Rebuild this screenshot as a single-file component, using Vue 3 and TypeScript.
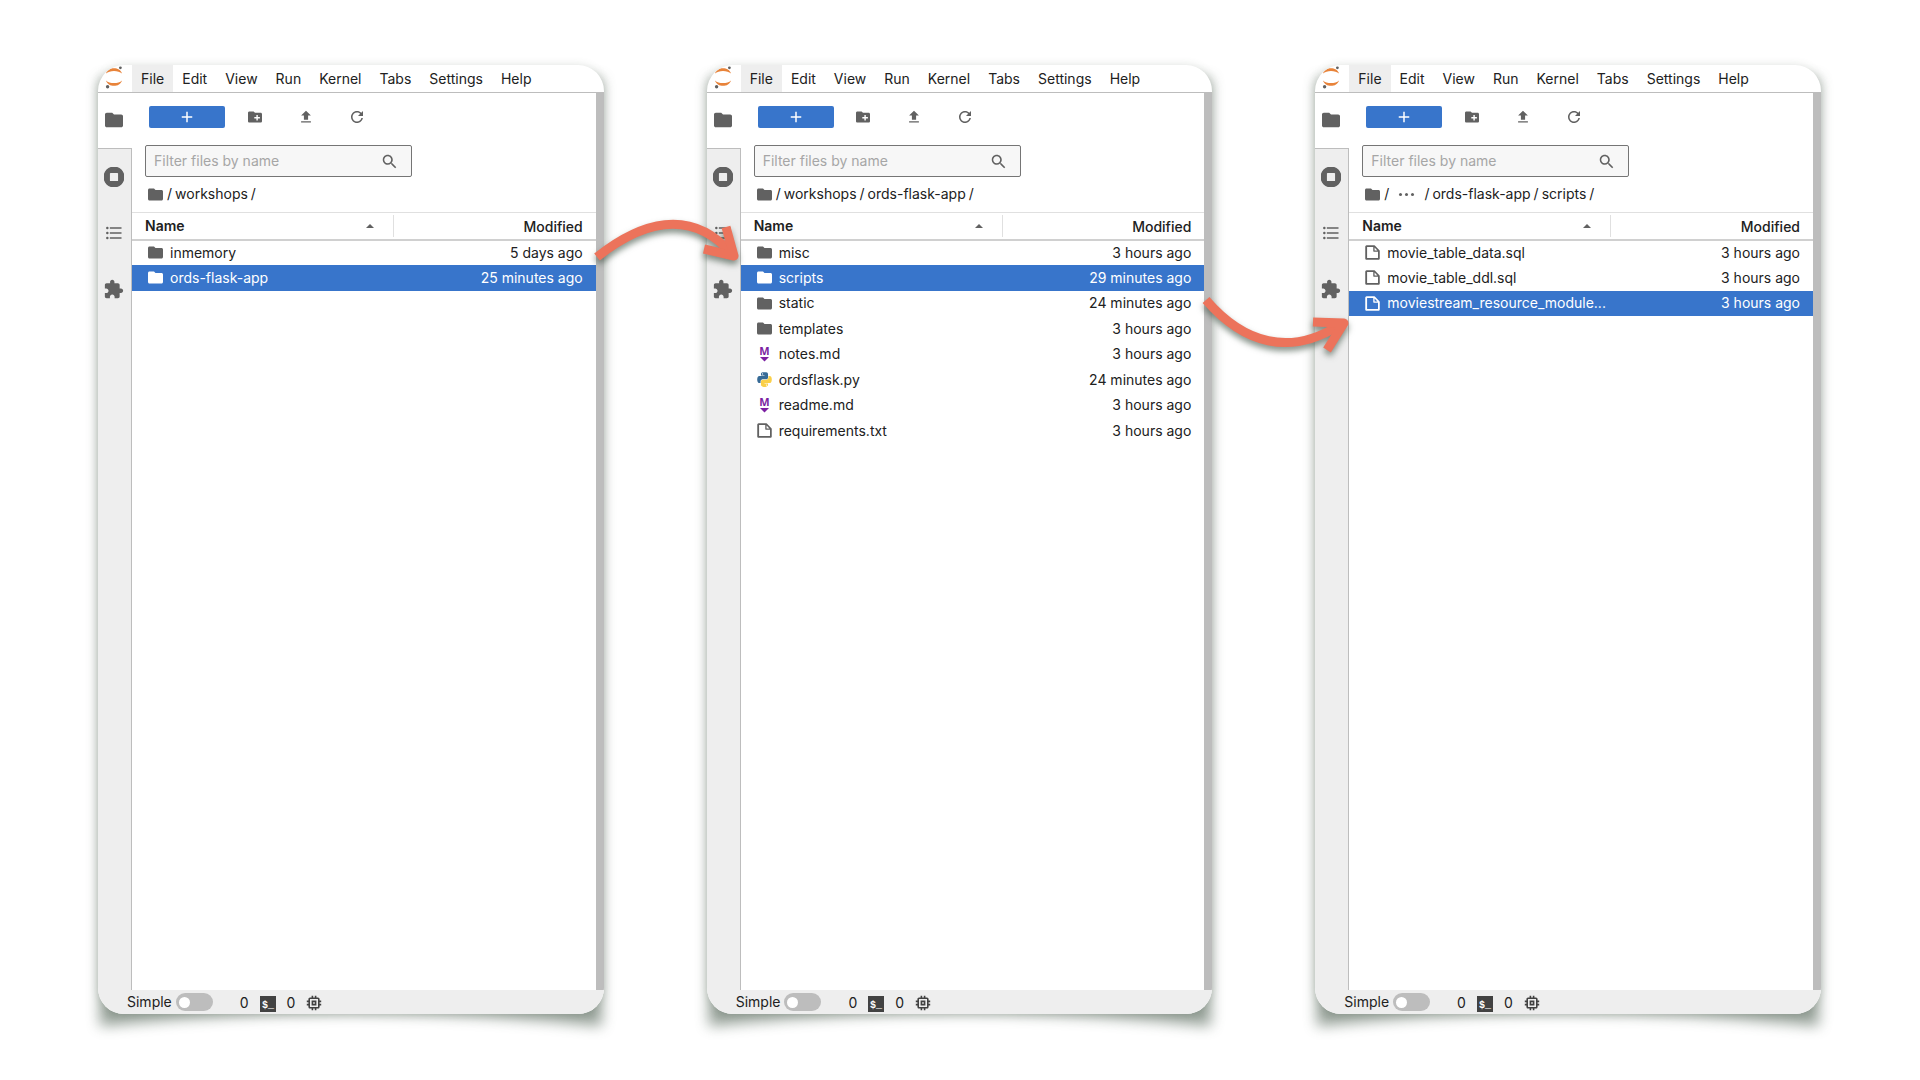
<script setup lang="ts">
type IconName =
  | 'folder' | 'newFolder' | 'upload' | 'refresh' | 'search' | 'running'
  | 'toc' | 'extension' | 'add' | 'file' | 'kernel'
type FileKind = 'folder' | 'markdown' | 'python' | 'file'

interface FileRow {
  name: string
  kind: FileKind
  modified: string
  selected?: boolean
}

interface Arrow {
  kind: string
  shaft: string
  head: string
}

interface Panel {
  id: string
  crumbs: string[]
  rows: FileRow[]
  arrow?: Arrow
}

const icons: Record<IconName, { box: string; d: string }> = {
  folder: { box: '2 2 20 20', d: 'M10 4H4c-1.1 0-1.99.9-1.99 2L2 18c0 1.1.9 2 2 2h16c1.1 0 2-.9 2-2V8c0-1.1-.9-2-2-2h-8l-2-2z' },
  newFolder: { box: '2 2 20 20', d: 'M20 6h-8l-2-2H4c-1.11 0-1.99.89-1.99 2L2 18c0 1.11.89 2 2 2h16c1.11 0 2-.89 2-2V8c0-1.11-.89-2-2-2zm-1 8h-3v3h-2v-3h-3v-2h3V9h2v3h3v2z' },
  upload: { box: '2 2 20 20', d: 'M5 20h14v-2H5v2zm0-10h4v6h6v-6h4l-7-7-7 7z' },
  refresh: { box: '2 2 14 14', d: 'M9 13.5c-2.49 0-4.5-2.01-4.5-4.5S6.51 4.5 9 4.5c1.24 0 2.36.52 3.17 1.33L10 8h5V3l-1.76 1.76C12.15 3.68 10.66 3 9 3 5.69 3 3.01 5.69 3.01 9S5.69 15 9 15c2.97 0 5.43-2.16 5.9-5h-1.52c-.46 2-2.24 3.5-4.38 3.5z' },
  search: { box: '1 1 16 16', d: 'M12.1 10.9h-.7l-.2-.2c.8-.9 1.3-2.2 1.3-3.5 0-3-2.4-5.4-5.4-5.4S1.8 4.2 1.8 7.1s2.4 5.4 5.4 5.4c1.3 0 2.5-.5 3.5-1.3l.2.2v.7l4.1 4.1 1.2-1.2-4.1-4.1zm-5 0c-2.1 0-3.7-1.7-3.7-3.7s1.7-3.7 3.7-3.7 3.7 1.7 3.7 3.7-1.6 3.7-3.7 3.7z' },
  running: { box: '20 20 472 472', d: 'M256 8C119 8 8 119 8 256s111 248 248 248 248-111 248-248S393 8 256 8zm96 328c0 8.8-7.2 16-16 16H176c-8.8 0-16-7.2-16-16V176c0-8.8 7.2-16 16-16h160c8.8 0 16 7.2 16 16v160z' },
  toc: { box: '0 0 24 24', d: 'M7,5H21V7H7V5M7,13V11H21V13H7M4,4.5A1.5,1.5 0 0,1 5.5,6A1.5,1.5 0 0,1 4,7.5A1.5,1.5 0 0,1 2.5,6A1.5,1.5 0 0,1 4,4.5M4,10.5A1.5,1.5 0 0,1 5.5,12A1.5,1.5 0 0,1 4,13.5A1.5,1.5 0 0,1 2.5,12A1.5,1.5 0 0,1 4,10.5M7,19V17H21V19H7M4,16.5A1.5,1.5 0 0,1 5.5,18A1.5,1.5 0 0,1 4,19.5A1.5,1.5 0 0,1 2.5,18A1.5,1.5 0 0,1 4,16.5Z' },
  extension: { box: '1 0 23 23', d: 'M20.5 11H19V7c0-1.1-.9-2-2-2h-4V3.5C13 2.12 11.88 1 10.5 1S8 2.12 8 3.5V5H4c-1.1 0-1.99.9-1.99 2v3.8H3.5c1.49 0 2.7 1.21 2.7 2.7s-1.21 2.7-2.7 2.7H2V20c0 1.1.9 2 2 2h3.8v-1.5c0-1.49 1.21-2.7 2.7-2.7 1.49 0 2.7 1.21 2.7 2.7V22H17c1.1 0 2-.9 2-2v-4h1.5c1.38 0 2.5-1.12 2.5-2.5S21.88 11 20.5 11z' },
  add: { box: '4 4 16 16', d: 'M19 13h-6v6h-2v-6H5v-2h6V5h2v6h6v2z' },
  file: { box: '2 2 18 18', d: 'M19.3 8.2l-5.5-5.5c-.3-.3-.7-.5-1.2-.5H3.9c-.8.1-1.6.9-1.6 1.8v14.1c0 .9.7 1.6 1.6 1.6h14.2c.9 0 1.6-.7 1.6-1.6V9.4c.1-.5-.1-.9-.4-1.2zm-5.8-3.3l3.4 3.6h-3.4V4.9zm3.9 12.7H4.7c-.1 0-.2 0-.2-.2V4.7c0-.2.1-.3.2-.3h7.2v4.4s0 .8.3 1.1c.3.3 1.1.3 1.1.3h4.3v7.2s-.1.2-.2.2z' },
  kernel: { box: '2 2 20 20', d: 'M15 9H9v6h6V9zm-2 4h-2v-2h2v2zm8-2V9h-2V7c0-1.1-.9-2-2-2h-2V3h-2v2h-2V3H9v2H7c-1.1 0-2 .9-2 2v2H3v2h2v2H3v2h2v2c0 1.1.9 2 2 2h2v2h2v-2h2v2h2v-2h2c1.1 0 2-.9 2-2v-2h2v-2h-2v-2h2zm-4 6H7V7h10v10z' },
}

const menus = ['File', 'Edit', 'View', 'Run', 'Kernel', 'Tabs', 'Settings', 'Help']
const tools: { icon: IconName; label: string }[] = [
  { icon: 'newFolder', label: 'New Folder' },
  { icon: 'upload', label: 'Upload Files' },
  { icon: 'refresh', label: 'Refresh File Browser' },
]
const sideTabs: { icon: IconName; label: string }[] = [
  { icon: 'folder', label: 'File Browser' },
  { icon: 'running', label: 'Running Terminals and Kernels' },
  { icon: 'toc', label: 'Table of Contents' },
  { icon: 'extension', label: 'Extension Manager' },
]

const panels: Panel[] = [
  {
    id: 'workshops',
    crumbs: ['workshops'],
    rows: [
      { name: 'inmemory', kind: 'folder', modified: '5 days ago' },
      { name: 'ords-flask-app', kind: 'folder', modified: '25 minutes ago', selected: true },
    ],
  },
  {
    id: 'flask',
    crumbs: ['workshops', 'ords-flask-app'],
    rows: [
      { name: 'misc', kind: 'folder', modified: '3 hours ago' },
      { name: 'scripts', kind: 'folder', modified: '29 minutes ago', selected: true },
      { name: 'static', kind: 'folder', modified: '24 minutes ago' },
      { name: 'templates', kind: 'folder', modified: '3 hours ago' },
      { name: 'notes.md', kind: 'markdown', modified: '3 hours ago' },
      { name: 'ordsflask.py', kind: 'python', modified: '24 minutes ago' },
      { name: 'readme.md', kind: 'markdown', modified: '3 hours ago' },
      { name: 'requirements.txt', kind: 'file', modified: '3 hours ago' },
    ],
    arrow: { kind: 'over', shaft: 'M10 57 C53 23 103 6 145 54', head: 'M139 27 L147 56 L117 49' },
  },
  {
    id: 'scripts',
    crumbs: ['…', 'ords-flask-app', 'scripts'],
    rows: [
      { name: 'movie_table_data.sql', kind: 'file', modified: '3 hours ago' },
      { name: 'movie_table_ddl.sql', kind: 'file', modified: '3 hours ago' },
      { name: 'moviestream_resource_module...', kind: 'file', modified: '3 hours ago', selected: true },
    ],
    arrow: { kind: 'under', shaft: 'M10 10 C48 54 94 66 142 36', head: 'M117 32 L148 33 L131 60' },
  },
]
</script>

<template>
  <main class="board">
    <section v-for="panel in panels" :key="panel.id" class="panel">
      <svg class="shade" viewBox="0 0 506 949" preserveAspectRatio="none" aria-hidden="true">
        <path d="M2 14 H504 V961 Q253 935 2 961 Z" />
      </svg>

      <div class="window">
        <nav class="menubar">
          <svg class="logo" viewBox="0 0 20 24" aria-hidden="true">
            <path d="M2 8.600 C4 1.600 16 1.600 18 8.600 C14.500 5 5.500 5 2 8.600 Z" fill="#e8833a" />
            <path d="M2 15.400 C4 22.600 16 22.600 18 15.400 C14.500 19 5.500 19 2 15.400 Z" fill="#e8833a" />
            <circle cx="16.400" cy="2.800" r="1.400" fill="#616161" />
            <circle cx="3.600" cy="21.800" r="1.700" fill="#616161" />
          </svg>
          <button v-for="(menu, i) in menus" :key="menu" type="button" class="menu" :class="{ open: i === 0 }">{{ menu }}</button>
        </nav>

        <div class="body">
          <aside class="sidebar">
            <button v-for="(tab, i) in sideTabs" :key="tab.icon" type="button" class="side-tab" :class="{ current: i === 0 }" :aria-label="tab.label">
              <svg :class="['side-icon', tab.icon]" :viewBox="icons[tab.icon].box"><path :d="icons[tab.icon].d" /></svg>
            </button>
          </aside>

          <div class="browser">
            <div class="toolbar">
              <button type="button" class="launch" aria-label="New Launcher">
                <svg :viewBox="icons.add.box"><path :d="icons.add.d" /></svg>
              </button>
              <button v-for="tool in tools" :key="tool.icon" type="button" class="tool" :aria-label="tool.label">
                <svg :viewBox="icons[tool.icon].box"><path :d="icons[tool.icon].d" /></svg>
              </button>
            </div>

            <label class="filter">
              <input type="text" placeholder="Filter files by name" aria-label="Filter files by name" />
              <svg :viewBox="icons.search.box" aria-hidden="true"><path :d="icons.search.d" /></svg>
            </label>

            <nav class="crumbs" aria-label="Path">
              <a href="#" aria-label="Root"><svg :viewBox="icons.folder.box"><path :d="icons.folder.d" /></svg></a>
              <span>/</span>
              <template v-for="crumb in panel.crumbs" :key="crumb">
                <a v-if="crumb === '…'" href="#" class="more" aria-label="More folders">
                  <i></i><i></i><i></i>
                </a>
                <a v-else href="#">{{ crumb }}</a>
                <span>/</span>
              </template>
            </nav>

            <table class="listing">
              <thead>
                <tr>
                  <th class="name-head">
                    <div class="name-cell">Name<svg class="caret" viewBox="0 0 10 5" aria-hidden="true"><path d="M0 5 L5 0 L10 5 Z" /></svg></div>
                  </th>
                  <th class="modified-head">Modified</th>
                </tr>
              </thead>
              <tbody>
                <tr v-for="row in panel.rows" :key="row.name" :class="{ selected: row.selected }">
                  <td>
                    <div class="entry">
                      <svg v-if="row.kind === 'markdown'" class="markdown" viewBox="0 0 15 20">
                        <text x="7.500" y="11" text-anchor="middle" class="md-letter">M</text>
                        <path d="M3 13 H12 L7.500 17.500 Z" fill="#7b1fa2" />
                      </svg>
                      <svg v-else-if="row.kind === 'python'" viewBox="-1 -1 113 114">
                        <path fill="#366a96" d="M54.900 0C50.300 0 45.900.4 42.100 1.100 30.800 3.100 28.700 7.300 28.700 15v10.200h26.800v3.400H18.600c-7.800 0-14.600 4.700-16.700 13.600-2.500 10.200-2.600 16.600 0 27.300 1.900 7.900 6.500 13.600 14.200 13.600h9.300V70.900c0-8.900 7.600-16.700 16.700-16.700h26.800c7.400 0 13.400-6.100 13.400-13.600V15c0-7.200-6.100-12.700-13.400-13.900C64.300.3 59.500 0 54.900 0Zm-14.500 8.200c2.800 0 5 2.300 5 5.100s-2.200 5.100-5 5.100-5-2.300-5-5.100 2.200-5.100 5-5.100Z" />
                        <path fill="#fad04a" d="M85.600 28.700v11.900c0 9.200-7.800 17-16.700 17H42.100c-7.300 0-13.400 6.300-13.400 13.600v25.500c0 7.300 6.300 11.500 13.400 13.600 8.500 2.500 16.600 2.900 26.800 0 6.700-2 13.400-5.900 13.400-13.600V86.500H55.500v-3.400h40.200c7.800 0 10.700-5.400 13.400-13.600 2.800-8.400 2.700-16.500 0-27.200-1.900-7.800-5.600-13.600-13.400-13.600ZM70.600 93.300c2.800 0 5 2.300 5 5.100s-2.200 5.100-5 5.100-5-2.300-5-5.100 2.200-5.100 5-5.100Z" />
                      </svg>
                      <svg v-else :viewBox="icons[row.kind].box"><path :d="icons[row.kind].d" /></svg>
                      <span>{{ row.name }}</span>
                    </div>
                  </td>
                  <td class="modified">{{ row.modified }}</td>
                </tr>
              </tbody>
            </table>
          </div>
          <div class="gutter"></div>
        </div>

        <footer class="status">
          <label class="simple">Simple<input type="checkbox" role="switch" /></label>
          <div class="counts">
            <span>0</span>
            <svg class="terminal" viewBox="0 0 16 16" aria-hidden="true">
              <rect width="16" height="16" fill="#424242" />
              <text x="2" y="12" class="prompt">$_</text>
            </svg>
            <span>0</span>
            <svg class="kernel" :viewBox="icons.kernel.box" aria-hidden="true"><path :d="icons.kernel.d" /></svg>
          </div>
        </footer>
      </div>

      <svg v-if="panel.arrow" :class="['arrow', panel.arrow.kind]" viewBox="0 0 160 80" aria-hidden="true">
        <path :d="panel.arrow.shaft" />
        <path :d="panel.arrow.head" />
      </svg>
    </section>
  </main>
</template>

<style>
body {
  margin: 0;
  background: #fff;
}
</style>

<style scoped>
.board {
  box-sizing: border-box;
  display: flex;
  gap: 103px;
  min-height: 100vh;
  padding: 65px 99px 66px 98px;
  overflow: hidden;
  background: #fff;
  color: #212121;
  font-family: Inter, "Liberation Sans", sans-serif;
  font-size: 14px;
  line-height: 20px;
}
.panel {
  position: relative;
  display: flex;
  flex: 1;
  min-width: 0;
}
.shade {
  position: absolute;
  inset: 0;
  width: 100%;
  height: 100%;
  overflow: visible;
  fill: #3c5040;
  opacity: 0.55;
  filter: blur(7px);
}
.window {
  position: relative;
  display: flex;
  flex: 1;
  flex-direction: column;
  min-width: 0;
  overflow: hidden;
  border-radius: 26px;
  background: #fff;
  box-shadow: 0 0 8px rgba(60, 80, 64, 0.16);
}
button {
  display: flex;
  align-items: center;
  justify-content: center;
  padding: 0;
  border: 0;
  background: none;
  color: inherit;
  font: inherit;
}
svg {
  fill: #616161;
  flex: none;
}
.menubar {
  display: flex;
  height: 27px;
  border-bottom: 1px solid #bdbdbd;
}
.logo {
  width: 20px;
  height: 24px;
  padding: 0 8px 0 6px;
}
.menu {
  padding: 0 9px;
}
.menu.open {
  background: #eee;
}
.body {
  display: flex;
  flex: 1;
}
.sidebar {
  display: flex;
  flex-direction: column;
  box-sizing: border-box;
  width: 34px;
  border-right: 1px solid #bdbdbd;
  background: #eee;
}
.side-tab {
  box-sizing: border-box;
  height: 56px;
  padding: 0 1px 1px 0;
}
.side-tab.current {
  margin-right: -1px;
  padding-right: 2px;
  border-bottom: 1px solid #bdbdbd;
  background: #fff;
}
.side-icon {
  width: 18px;
  height: 18px;
}
.side-icon.running,
.side-icon.toc,
.side-icon.extension {
  width: 20px;
  height: 20px;
}
.browser {
  flex: 1;
  min-width: 0;
}
.gutter {
  width: 8px;
  background: #bdbdbd;
}
.toolbar {
  display: flex;
  height: 22px;
  padding: 13px 17px 17px;
}
.launch {
  width: 76px;
  margin-right: 4px;
  border-radius: 2px;
  background: #3875cb;
}
.launch svg {
  width: 12px;
  height: 12px;
  fill: #fff;
}
.tool {
  width: 51px;
}
.tool svg {
  width: 14px;
  height: 14px;
}
.filter {
  display: flex;
  align-items: center;
  box-sizing: border-box;
  width: 267px;
  height: 32px;
  margin-left: 13px;
  padding: 0 14px 0 8px;
  border: 1px solid #757575;
  border-radius: 2px;
  background: #f7f7f7;
}
.filter input {
  flex: 1;
  min-width: 0;
  padding: 0;
  border: 0;
  outline: 0;
  background: none;
  color: inherit;
  font: inherit;
}
.filter input::placeholder {
  color: #a6a6a6;
  opacity: 1;
}
.filter svg {
  width: 15px;
  height: 15px;
}
.crumbs {
  display: flex;
  align-items: center;
  gap: 3px;
  height: 34px;
  padding: 0 0 1px 16px;
}
.crumbs a {
  display: flex;
  align-items: center;
  color: inherit;
  text-decoration: none;
}
.crumbs svg {
  width: 15px;
  height: 15px;
  padding-right: 1px;
}
.crumbs .more {
  gap: 3px;
  padding: 0 7px;
}
.more i {
  width: 3px;
  height: 3px;
  border-radius: 50%;
  background: #616161;
}
.listing {
  width: 100%;
  border-collapse: collapse;
  table-layout: fixed;
}
th {
  box-sizing: border-box;
  height: 27px;
  padding: 0;
  border-top: 1px solid #e0e0e0;
  border-bottom: 2px solid #d0d0d0;
  font-weight: 500;
}
.name-head {
  width: 262px;
  font-weight: 600;
}
.name-cell {
  display: flex;
  align-items: center;
  justify-content: space-between;
  height: 22px;
  padding: 0 19px 0 13px;
  border-right: 1px solid #e0e0e0;
}
.caret {
  width: 8px;
  height: 4px;
}
.modified-head {
  padding: 2px 13px 0 0;
  text-align: right;
}
tbody tr {
  height: 25px;
}
tbody tr:nth-child(even) {
  height: 26px;
}
td {
  padding: 0;
}
.entry {
  display: flex;
  align-items: center;
  gap: 7px;
  padding-left: 16px;
  white-space: nowrap;
}
.entry svg {
  width: 15px;
  height: 15px;
}
.entry .markdown {
  height: 20px;
  overflow: visible;
}
.md-letter {
  fill: #7b1fa2;
  font: 700 11px "Open Sans", sans-serif;
}
.modified {
  padding-right: 13px;
  text-align: right;
}
.selected {
  background: #3875cb;
  color: #fff;
}
.selected svg {
  fill: #fff;
}
.status {
  display: flex;
  align-items: center;
  gap: 27px;
  height: 24px;
  padding-left: 29px;
  background: #eee;
}
.simple {
  display: flex;
  align-items: center;
  gap: 4px;
}
.simple input {
  display: flex;
  align-items: center;
  box-sizing: border-box;
  width: 37px;
  height: 18px;
  margin: 0;
  padding: 0 3px;
  border-radius: 9px;
  appearance: none;
  background: #bdbdbd;
}
.simple input::before {
  width: 11px;
  height: 11px;
  border-radius: 50%;
  background: #fff;
  content: "";
}
.counts {
  display: flex;
  align-items: center;
  gap: 11px;
  padding-top: 2px;
}
.terminal {
  width: 16px;
  height: 16px;
  padding-top: 2px;
}
.prompt {
  fill: #fff;
  font: 700 10px "Liberation Mono", monospace;
}
.kernel {
  width: 16px;
  height: 16px;
  fill: #424242;
}
.arrow {
  position: absolute;
  width: 160px;
  height: 80px;
  overflow: visible;
  fill: none;
  stroke: #ec735b;
  stroke-width: 9px;
  stroke-linejoin: round;
  filter: drop-shadow(0 4px 3px rgba(50, 70, 55, 0.6));
}
.arrow.over {
  top: 135px;
  left: -120px;
}
.arrow.under {
  top: 225px;
  left: -119px;
}
</style>
